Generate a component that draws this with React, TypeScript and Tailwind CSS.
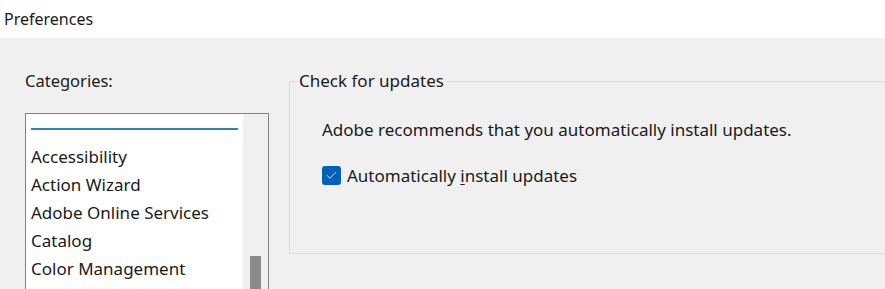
import { Check } from "lucide-react";

const categories = [
  "Accessibility",
  "Action Wizard",
  "Adobe Online Services",
  "Catalog",
  "Color Management",
];

export default function App() {
  return (
    <div
      className="w-[885px] h-[289px] overflow-hidden flex flex-col text-[#1a1a1a]"
      style={{ fontFamily: '"Noto Sans", "Open Sans", sans-serif' }}
    >
      <div className="h-[38px] shrink-0 bg-white pl-[4px] flex items-center text-[16px]">
        Preferences
      </div>
      <div className="flex-1 bg-[#f0f0f0] flex pl-[25px] overflow-hidden">
        <div className="w-[244px] shrink-0 flex flex-col">
          <div className="h-[75px] shrink-0 pt-[32px] text-[16.5px] leading-[22px]">Categories:</div>
          <div className="flex-1 flex bg-white border border-[#828282] border-b-0">
            <div className="flex-1 pl-[5px] pr-[5px] pt-[14px]">
              <div className="h-[2px] bg-[#2a86b0] mb-[13px]" />
              {categories.map((c) => (
                <div key={c} className="h-[28px] flex items-center text-[17px]">
                  {c}
                </div>
              ))}
            </div>
            <div className="w-[25px] bg-[#f0f0f0] flex justify-center pt-[142px]">
              <div className="w-[11px] h-[40px] bg-[#8a8a8a]" />
            </div>
          </div>
        </div>
        <div className="ml-[20px] pt-[32px] shrink-0">
          <fieldset className="w-[640px] h-[184px] border border-[#dcdcdc]">
            <legend className="ml-[8px] px-[1px] text-[17px] leading-[22px]">Check for updates</legend>
            <div className="pl-[32px] pt-[27px] text-[17px] leading-[22px]">
              Adobe recommends that you automatically install updates.
            </div>
            <div className="pl-[32px] mt-[22px] flex items-center gap-[6px] text-[17px]">
              <div className="w-[19px] h-[19px] rounded-[3px] bg-[#005fb8] flex items-center justify-center">
                <Check className="w-[13px] h-[13px] text-white" strokeWidth={1.5} />
              </div>
              <span>
                Automatically <span className="underline underline-offset-2">i</span>nstall updates
              </span>
            </div>
          </fieldset>
        </div>
      </div>
    </div>
  );
}
